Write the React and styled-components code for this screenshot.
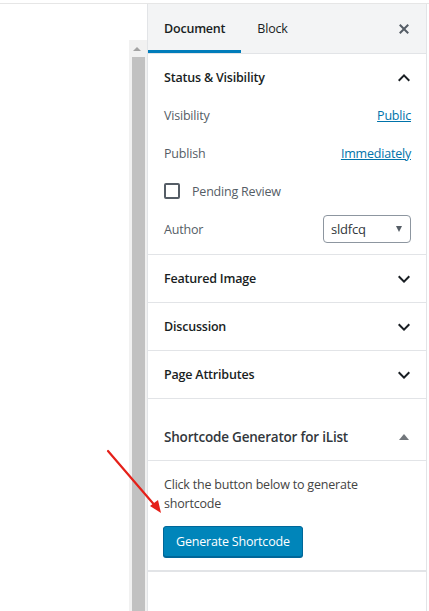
import React from "react";
import styled, { createGlobalStyle } from "styled-components";

const GlobalStyle = createGlobalStyle`
  html, body {
    margin: 0;
    padding: 0;
    background: #fff;
  }
  body {
    font-family: "Open Sans", "Noto Sans", sans-serif;
    font-size: 12.5px;
    letter-spacing: -0.2px;
    color: #191e23;
  }
  * {
    box-sizing: border-box;
  }
`;

const Page = styled.div`
  position: relative;
  width: 429px;
  height: 611px;
  overflow: hidden;
  display: flex;
  flex-direction: column;
  background: #fff;
`;

const TopStrip = styled.div`
  height: 4px;
  border-bottom: 1px solid #e6e6e6;
  flex: none;
`;

const Main = styled.div`
  flex: 1;
  display: flex;
  min-height: 0;
`;

const Canvas = styled.div`
  width: 129px;
  flex: none;
`;

const ScrollTrack = styled.div`
  width: 18px;
  flex: none;
  margin-top: 36px;
  background: #f1f1f1;
  display: flex;
  flex-direction: column;
`;

const ScrollUp = styled.div`
  height: 17px;
  display: flex;
  align-items: center;
  justify-content: center;
  padding-right: 3px;

  &::before {
    content: "";
    border-left: 4px solid transparent;
    border-right: 4px solid transparent;
    border-bottom: 4px solid #a3a3a3;
  }
`;

const ScrollThumb = styled.div`
  flex: 1;
  margin: 0 2px 0 3px;
  background: #c1c1c1;
`;

const Sidebar = styled.div`
  width: 280px;
  flex: none;
  border-left: 1px solid #e2e4e7;
  border-right: 1px solid #e2e4e7;
  display: flex;
  flex-direction: column;
`;

const Header = styled.div`
  height: 50px;
  flex: none;
  background: #f3f4f5;
  border-bottom: 1px solid #e2e4e7;
  display: flex;
  align-items: stretch;
`;

const Tab = styled.div`
  padding: 3px 16px 0;
  display: flex;
  align-items: center;
  font-size: 12.5px;
  font-weight: ${(p) => (p.active ? 600 : 400)};
  color: #191e23;
  border-bottom: 3px solid ${(p) => (p.active ? "#007cba" : "transparent")};
`;

const HeaderSpacer = styled.div`
  flex: 1;
`;

const CloseButton = styled.div`
  width: 36px;
  margin-right: 4px;
  display: flex;
  align-items: center;
  justify-content: center;
  color: #555d66;
`;

const Panel = styled.div`
  border-bottom: ${(p) => (p.thick ? "2px" : "1px")} solid #e2e4e7;
  flex: none;
`;

const PanelHeader = styled.div`
  height: 47px;
  padding: 0 10px 0 16px;
  display: flex;
  align-items: center;
  justify-content: space-between;
  font-size: 12.5px;
  font-weight: 600;
  color: #191e23;
`;

const PanelBody = styled.div`
  padding: 0 15px 11px 16px;
  display: flex;
  flex-direction: column;
  gap: 10px;
`;

const Row = styled.div`
  height: 28px;
  display: flex;
  align-items: center;
  justify-content: space-between;
  color: #555d66;
`;

const Link = styled.a`
  color: #0073aa;
  text-decoration: underline;
`;

const CheckRow = styled.label`
  height: 28px;
  display: flex;
  align-items: center;
  gap: 12px;
  color: #555d66;
`;

const CheckBox = styled.span`
  width: 16px;
  height: 16px;
  border: 2px solid #555d66;
  border-radius: 2px;
  background: #fff;
`;

const Select = styled.div`
  width: 88px;
  height: 28px;
  border: 1px solid #8d96a0;
  border-radius: 4px;
  padding: 0 8px 0 7px;
  display: flex;
  align-items: center;
  justify-content: space-between;
  color: #32373c;
  font-size: 13px;

  &::after {
    content: "";
    border-left: 3.5px solid transparent;
    border-right: 3.5px solid transparent;
    border-top: 6px solid #555d66;
  }
`;

const MetaHeader = styled.div`
  height: 48px;
  margin-top: 14px;
  padding: 0 17px 0 16px;
  border-bottom: 1px solid #e2e4e7;
  display: flex;
  align-items: center;
  justify-content: space-between;
  font-size: 13.5px;
  font-weight: 600;
  color: #32373c;

  &::after {
    content: "";
    border-left: 5px solid transparent;
    border-right: 5px solid transparent;
    border-bottom: 6px solid #72777c;
  }
`;

const MetaBody = styled.div`
  padding: 14px 16px 13px 15px;
`;

const MetaText = styled.p`
  margin: 0 0 13px 1px;
  line-height: 19px;
  color: #444;
`;

const PrimaryButton = styled.button`
  height: 31px;
  padding: 0 12px;
  border: 1px solid #006799;
  border-radius: 3px;
  background: #0085ba;
  box-shadow: 0 1px 0 #006799;
  color: #fff;
  font-family: inherit;
  font-size: 12.5px;
  letter-spacing: -0.2px;
`;

const ArrowOverlay = styled.svg`
  position: absolute;
  left: 0;
  top: 0;
  pointer-events: none;
`;

const Chevron = ({ up }) => (
  <svg width="24" height="24" viewBox="0 0 24 24" style={{ transform: up ? "rotate(180deg)" : "none" }}>
    <path d="M7.41 8.59L12 13.17l4.59-4.58L18 10l-6 6-6-6 1.41-1.41z" fill="#191e23" />
  </svg>
);

const CloseIcon = () => (
  <svg width="20" height="20" viewBox="0 0 20 20">
    <path
      d="M14.95 6.46L11.41 10l3.54 3.54-1.41 1.41L10 11.42l-3.53 3.53-1.42-1.42L8.58 10 5.05 6.47l1.42-1.42L10 8.58l3.54-3.53z"
      fill="#555d66"
    />
  </svg>
);

const collapsed = ["Featured Image", "Discussion", "Page Attributes"];

export default function App() {
  return (
    <Page>
      <GlobalStyle />
      <TopStrip />
      <Main>
        <Canvas />
        <ScrollTrack>
          <ScrollUp />
          <ScrollThumb />
        </ScrollTrack>
        <Sidebar>
          <Header>
            <Tab active>Document</Tab>
            <Tab>Block</Tab>
            <HeaderSpacer />
            <CloseButton>
              <CloseIcon />
            </CloseButton>
          </Header>

          <Panel>
            <PanelHeader>
              Status &amp; Visibility
              <Chevron up />
            </PanelHeader>
            <PanelBody>
              <Row>
                Visibility
                <Link>Public</Link>
              </Row>
              <Row>
                Publish
                <Link>Immediately</Link>
              </Row>
              <CheckRow>
                <CheckBox />
                Pending Review
              </CheckRow>
              <Row>
                Author
                <Select>sldfcq</Select>
              </Row>
            </PanelBody>
          </Panel>

          {collapsed.map((title) => (
            <Panel key={title}>
              <PanelHeader>
                {title}
                <Chevron />
              </PanelHeader>
            </Panel>
          ))}

          <Panel thick>
            <MetaHeader>Shortcode Generator for iList</MetaHeader>
            <MetaBody>
              <MetaText>Click the button below to generate shortcode</MetaText>
              <PrimaryButton>Generate Shortcode</PrimaryButton>
            </MetaBody>
          </Panel>
        </Sidebar>
      </Main>

      <ArrowOverlay width="429" height="611">
        <line x1="108" y1="451" x2="157" y2="508" stroke="#e52019" strokeWidth="2.2" strokeLinecap="round" />
        <path d="M161 513 L150 506 L158 500 Z" fill="#e52019" />
      </ArrowOverlay>
    </Page>
  );
}
